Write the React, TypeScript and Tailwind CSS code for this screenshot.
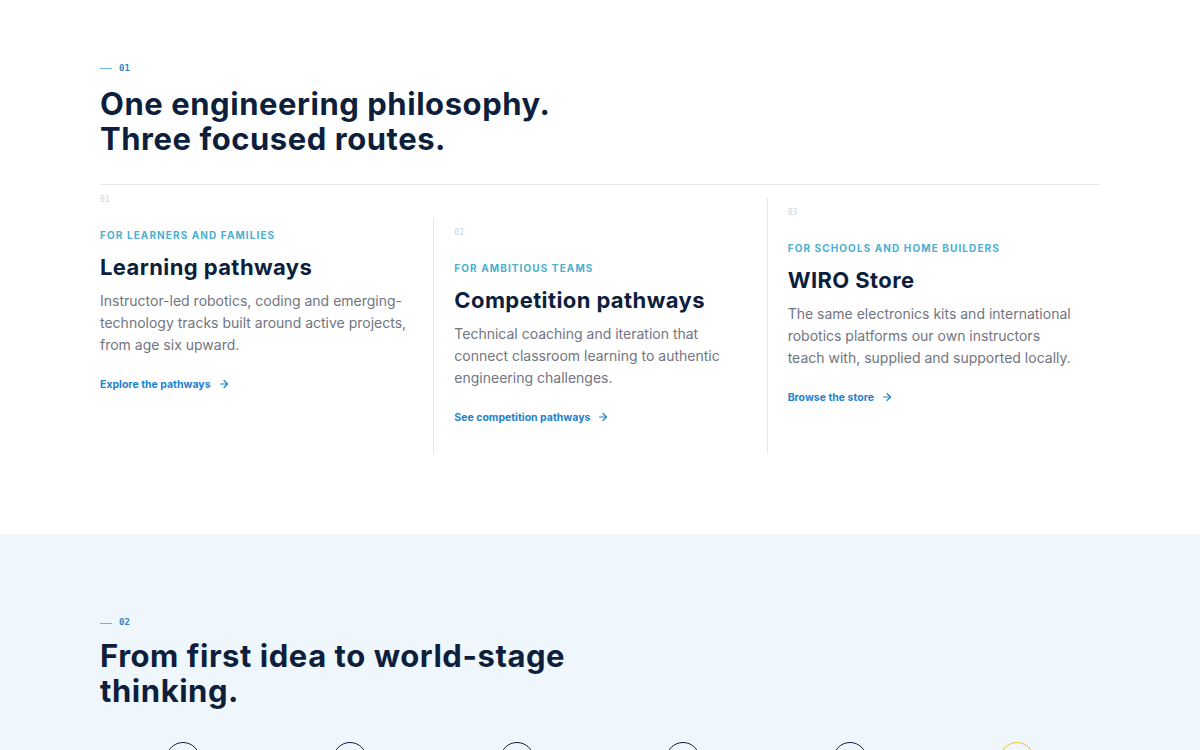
const routes = [
  {
    num: "01",
    label: "For learners and families",
    title: "Learning pathways",
    body: "Instructor-led robotics, coding and emerging-technology tracks built around active projects, from age six upward.",
    cta: "Explore the pathways",
    offset: "mt-0",
    border: "",
  },
  {
    num: "02",
    label: "For ambitious teams",
    title: "Competition pathways",
    body: "Technical coaching and iteration that connect classroom learning to authentic engineering challenges.",
    cta: "See competition pathways",
    offset: "mt-[33px]",
    border: "border-l border-[#dde9ee] pl-5",
  },
  {
    num: "03",
    label: "For schools and home builders",
    title: "WIRO Store",
    body: "The same electronics kits and international robotics platforms our own instructors teach with, supplied and supported locally.",
    cta: "Browse the store",
    offset: "mt-[13px]",
    border: "border-l border-[#dde9ee] pl-5",
  },
]

// timeline markers, the last one is highlighted
const steps = ["discover", "build", "code", "iterate", "compete", "lead"]

function Eyebrow({ n }: { n: string }) {
  return (
    <div className="flex items-center gap-[7px] font-['DejaVu_Sans_Mono',monospace] text-[9px] font-bold text-[#2d86c6]">
      <span className="h-px w-3 bg-[#6fb4dd]" />
      <span>{n}</span>
    </div>
  )
}

function Arrow() {
  return (
    <svg width="12" height="12" viewBox="0 0 24 24" fill="none" stroke="currentColor" strokeWidth="2.4" strokeLinecap="round" strokeLinejoin="round">
      <path d="M5 12h14" />
      <path d="m12 5 7 7-7 7" />
    </svg>
  )
}

export default function App() {
  return (
    <div className="min-h-screen bg-white font-['Inter',sans-serif] text-[#0d1f3c]">
      <section className="px-[100px] pb-20 pt-[62px]">
        <Eyebrow n="01" />
        <h2 className="mt-[10px] text-[31px] font-bold leading-[35px] tracking-[0.55px]">
          One engineering philosophy.
          <br />
          Three focused routes.
        </h2>

        <div className="mt-[28px] grid grid-cols-3 border-t border-[#e6e9ee]">
          {routes.map((r) => (
            <article key={r.num} className={`${r.offset} ${r.border} flex flex-col pb-[29px] pr-5 pt-[9px]`}>
              <span className="font-['DejaVu_Sans_Mono',monospace] text-[8px] text-[#c9d8e4]">{r.num}</span>
              <p className="mt-[22px] text-[10px] font-bold uppercase leading-[14px] tracking-[1.1px] text-[#4aafd0]">{r.label}</p>
              <h3 className="mt-[11px] text-[22px] font-bold leading-[28px] tracking-[0.4px]">{r.title}</h3>
              <p className="mt-[9px] text-[14px] leading-[22px] text-[#71757f]">{r.body}</p>
              <a className="mt-[21px] flex items-center gap-[7px] text-[10.5px] font-bold text-[#1d82cf]">
                {r.cta}
                <Arrow />
              </a>
            </article>
          ))}
        </div>
      </section>

      <section className="bg-[#eff6fc] px-[100px] pb-20 pt-[82px]">
        <Eyebrow n="02" />
        <h2 className="mt-[8px] text-[31px] font-bold leading-[35px] tracking-[0.55px]">
          From first idea to world-stage
          <br />
          thinking.
        </h2>
        <div className="mt-[34px] grid grid-cols-6">
          {steps.map((s, i) => (
            <div key={s} className="flex justify-center">
              <span
                className={`h-[34px] w-[34px] rounded-full border-[1.5px] ${
                  i === steps.length - 1 ? "border-[#f2c230]" : "border-[#0d1f3c]"
                }`}
              />
            </div>
          ))}
        </div>
      </section>
    </div>
  )
}
